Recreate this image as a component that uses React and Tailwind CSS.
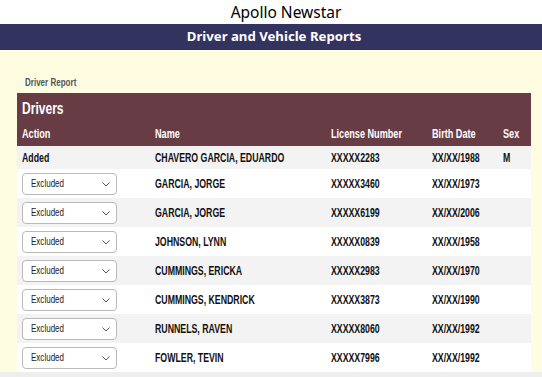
import React from 'react';

const drivers = [
  { name: 'GARCIA, JORGE', license: 'XXXXX3460', birth: 'XX/XX/1973' },
  { name: 'GARCIA, JORGE', license: 'XXXXX6199', birth: 'XX/XX/2006' },
  { name: 'JOHNSON, LYNN', license: 'XXXXX0839', birth: 'XX/XX/1958' },
  { name: 'CUMMINGS, ERICKA', license: 'XXXXX2983', birth: 'XX/XX/1970' },
  { name: 'CUMMINGS, KENDRICK', license: 'XXXXX3873', birth: 'XX/XX/1990' },
  { name: 'RUNNELS, RAVEN', license: 'XXXXX8060', birth: 'XX/XX/1992' },
  { name: 'FOWLER, TEVIN', license: 'XXXXX7996', birth: 'XX/XX/1992' },
];

const cols = 'grid grid-cols-[133px_176px_101px_71px_1fr] items-center';

// condensed helvetica look: arial squeezed horizontally
const C = ({ children }) => (
  <span className="inline-block whitespace-nowrap origin-left scale-x-[0.73]">{children}</span>
);

const ActionSelect = () => (
  <div className="relative w-[95px] h-[22px] bg-white border border-[#b9b9b9] rounded-[4px] flex items-center pl-[8px] text-[11px] text-[#222] font-normal">
    <C>Excluded</C>
    <svg className="absolute right-[6px] top-[8px]" width="8" height="5" viewBox="0 0 8 5" fill="none">
      <path d="M0.5 0.5 L4 4 L7.5 0.5" stroke="#555" strokeWidth="1" />
    </svg>
  </div>
);

export default function App() {
  return (
    <div className="w-[542px] h-[377px] overflow-hidden bg-[#fffde1] flex flex-col">
      <div className="h-[24px] bg-white flex items-center justify-center pl-[30px] pt-[1px] text-[15.5px] text-black font-['Noto_Sans',sans-serif]">
        Apollo Newstar
      </div>
      <div className="h-[26px] bg-[#33335f] flex items-center justify-center pl-[6px] text-[13.2px] font-bold text-white font-['Noto_Sans',sans-serif]">
        Driver and Vehicle Reports
      </div>

      <div className="font-['Liberation_Sans',Arial,sans-serif]">
        <div className="pt-[24px] pl-[25px] h-[43px] text-[11px] font-bold text-[#555]">
          <C>Driver Report</C>
        </div>

        <div className="mx-[17px] w-[514px] font-bold">
          <div className="h-[29px] bg-[#683c45] flex items-center pl-[5px] pt-[1px] text-[16.5px] text-white">
            <C>Drivers</C>
          </div>
          <div className={`${cols} h-[24px] bg-[#683c45] text-[12.5px] text-white [&>div]:pl-[5px]`}>
            <div><C>Action</C></div>
            <div><C>Name</C></div>
            <div><C>License Number</C></div>
            <div><C>Birth Date</C></div>
            <div><C>Sex</C></div>
          </div>
          <div className={`${cols} h-[23px] bg-[#f3f3f3] text-[12px] text-[#111] [&>div]:pl-[5px]`}>
            <div><C>Added</C></div>
            <div><C>CHAVERO GARCIA, EDUARDO</C></div>
            <div><C>XXXXX2283</C></div>
            <div><C>XX/XX/1988</C></div>
            <div><C>M</C></div>
          </div>
          {drivers.map((d, i) => (
            <div
              key={i}
              className={`${cols} h-[29px] text-[12px] text-[#111] [&>div]:pl-[5px] ${i % 2 === 0 ? 'bg-white' : 'bg-[#f3f3f3]'}`}
            >
              <div><ActionSelect /></div>
              <div><C>{d.name}</C></div>
              <div><C>{d.license}</C></div>
              <div><C>{d.birth}</C></div>
              <div></div>
            </div>
          ))}
        </div>
      </div>
      <div className="flex-1 bg-[#eeeeee]" />
    </div>
  );
}
